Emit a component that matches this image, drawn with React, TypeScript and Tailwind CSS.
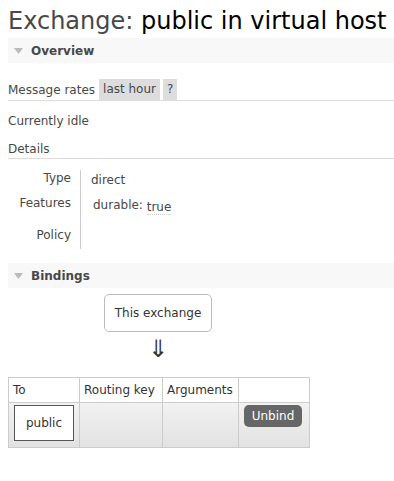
const font = { fontFamily: '"DejaVu Sans", Verdana, sans-serif' };

function SectionBar({ title }: { title: string }) {
  return (
    <div className="flex items-center h-[25px] bg-[#f8f8f8] pl-[6px]">
      <svg width="9" height="6" viewBox="0 0 9 6" className="mr-[8px]">
        <polygon points="0,0 9,0 4.5,6" fill="#bbbbbb" />
      </svg>
      <span className="text-[12px] font-bold text-[#484848]">{title}</span>
    </div>
  );
}

export default function App() {
  return (
    <div className="w-[394px] h-[481px] bg-white text-[#484848] pl-[8px] overflow-hidden" style={font}>
      <h1 className="text-[24px] leading-[30px] pt-[6px] text-[#484848] whitespace-nowrap">
        Exchange: <span className="text-black">public in virtual host</span>
      </h1>

      <div className="mt-[2px]">
        <SectionBar title="Overview" />
      </div>

      <div className="mt-[16px] flex items-center h-[22px] border-b border-[#dddddd] text-[12px]">
        <span className="mr-[4px]">Message rates</span>
        <span className="bg-[#dddddd] px-[4px] h-[21px] leading-[21px] mr-[3px]">last hour</span>
        <span className="bg-[#dddddd] px-[4px] h-[21px] leading-[21px]">?</span>
      </div>

      <p className="text-[12px] mt-[12px] leading-[16px]">Currently idle</p>

      <div className="mt-[12px] text-[12px] leading-[16px] pb-[1px] border-b border-[#dddddd]">Details</div>

      <div className="flex mt-[11px] text-[12px]">
        <div className="w-[63px] text-right flex flex-col">
          <span className="h-[25px] leading-[16px]">Type</span>
          <span className="h-[32px] leading-[16px]">Features</span>
          <span className="h-[22px] leading-[16px]">Policy</span>
        </div>
        <div className="ml-[9px] border-l border-[#cccccc] pl-[10px] flex flex-col pt-[2px]">
          <span className="h-[25px] leading-[16px]">direct</span>
          <span className="h-[32px] leading-[16px] pl-[2px]">
            durable:{' '}
            <span className="inline-block translate-y-[2px] border-b border-dotted border-[#cccccc] leading-[14px]">true</span>
          </span>
          <span className="h-[20px]" />
        </div>
      </div>

      <div className="mt-[14px]">
        <SectionBar title="Bindings" />
      </div>

      <div className="w-[302px] flex flex-col items-center">
        <div className="mt-[6px] border border-[#bbbbbb] rounded-[5px] w-[108px] h-[38px] flex items-center justify-center text-[12px] text-[#333333] mr-[2px]">
          This exchange
        </div>
        <div className="text-[24px] leading-[26px] mt-[4px] text-[#333333] mr-[2px]">⇓</div>
      </div>

      <table className="mt-[15px] border-collapse text-[12px] text-[#333333]">
        <thead>
          <tr className="h-[25px] bg-white">
            <th className="border border-[#cccccc] font-normal text-left px-[4px] w-[71px]">To</th>
            <th className="border border-[#cccccc] font-normal text-left px-[4px] w-[83px]">Routing key</th>
            <th className="border border-[#cccccc] font-normal text-left px-[4px] w-[76px]">Arguments</th>
            <th className="border border-[#cccccc] font-normal w-[71px]"></th>
          </tr>
        </thead>
        <tbody>
          <tr className="h-[45px] bg-gradient-to-b from-[#f2f2f2] to-[#e2e2e2]">
            <td className="border border-[#cccccc] p-[2px] pl-[5px] align-top">
              <div className="bg-white border border-[#555555] w-[60px] h-[36px] flex items-center justify-center">public</div>
            </td>
            <td className="border border-[#cccccc]"></td>
            <td className="border border-[#cccccc]"></td>
            <td className="border border-[#cccccc] align-top pt-[2px] pl-[5px]">
              <button className="bg-[#666666] text-white rounded-[5px] w-[58px] h-[22px] text-[12px]">Unbind</button>
            </td>
          </tr>
        </tbody>
      </table>
    </div>
  );
}
